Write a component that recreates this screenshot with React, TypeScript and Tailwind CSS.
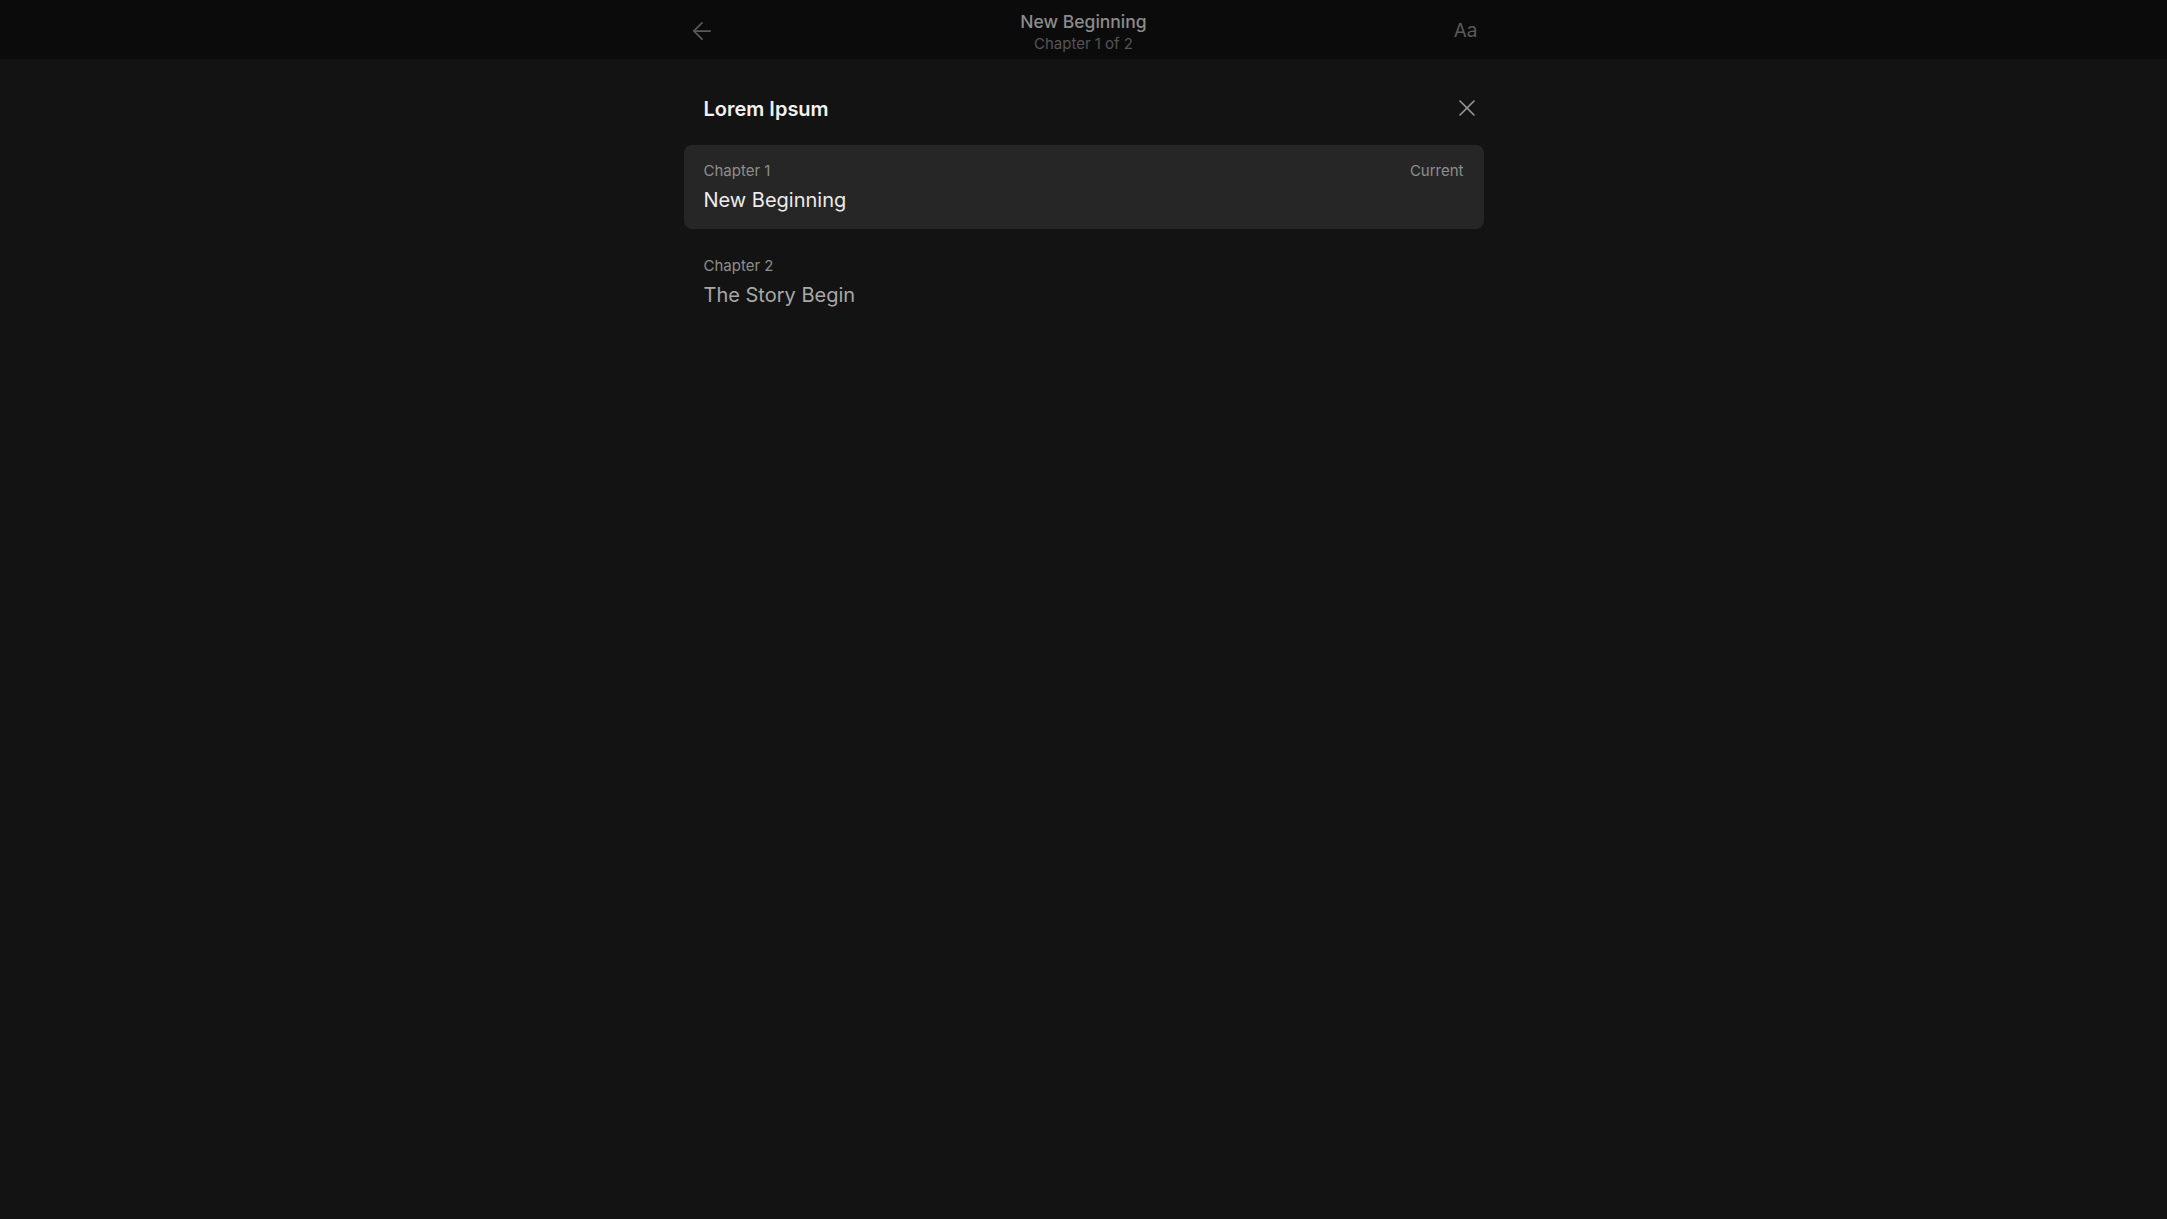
import { ArrowLeft, X } from 'lucide-react'

const chapters = [
  { num: 1, title: 'New Beginning', current: true },
  { num: 2, title: 'The Story Begin', current: false },
]

export default function App() {
  return (
    <div
      className="min-h-screen bg-[#131313] text-white"
      style={{ fontFamily: 'Inter, "Noto Sans", sans-serif' }}
    >
      <header className="bg-[#0b0b0b] h-[59px]">
        <div className="w-[800px] mx-auto h-full grid grid-cols-[1fr_auto_1fr] items-center">
          <div className="flex">
            <button className="pl-[4px] pr-2 mt-[3px] text-[#5a5a5a]">
              <ArrowLeft className="w-7 h-7" strokeWidth={1.5} />
            </button>
          </div>
          <div className="flex flex-col items-center pt-[4px]">
            <div className="text-[17.5px] leading-[24px] text-[#8c8c8c] font-medium">New Beginning</div>
            <div className="text-[15px] leading-[20px] text-[#555555]">Chapter 1 of 2</div>
          </div>
          <div className="flex justify-end">
            <button className="pl-2 pr-[6px] pt-[3px] text-[19px] text-[#5a5a5a]">Aa</button>
          </div>
        </div>
      </header>

      <main className="w-[800px] mx-auto pt-[22px]">
        <div className="flex items-center justify-between pl-5 pr-[3px] h-[56px]">
          <h2 className="text-[20px] font-semibold text-[#f2f2f2]">Lorem Ipsum</h2>
          <button className="text-[#9a9a9a] -mt-[2px]">
            <X className="w-7 h-7" strokeWidth={1.4} />
          </button>
        </div>

        <div className="mt-[8px] flex flex-col gap-[11px]">
          {chapters.map((c) => (
            <div
              key={c.num}
              className={`rounded-lg px-5 h-[84px] pt-[1px] flex flex-col justify-center ${c.current ? 'bg-[#262626]' : ''}`}
            >
              <div className="flex items-center justify-between text-[15px] text-[#8e8e8e]">
                <span>Chapter {c.num}</span>
                {c.current && <span>Current</span>}
              </div>
              <div className={`mt-[3px] text-[20px] ${c.current ? 'text-[#ececec]' : 'text-[#a8a8a8]'}`}>
                {c.title}
              </div>
            </div>
          ))}
        </div>
      </main>
    </div>
  )
}
